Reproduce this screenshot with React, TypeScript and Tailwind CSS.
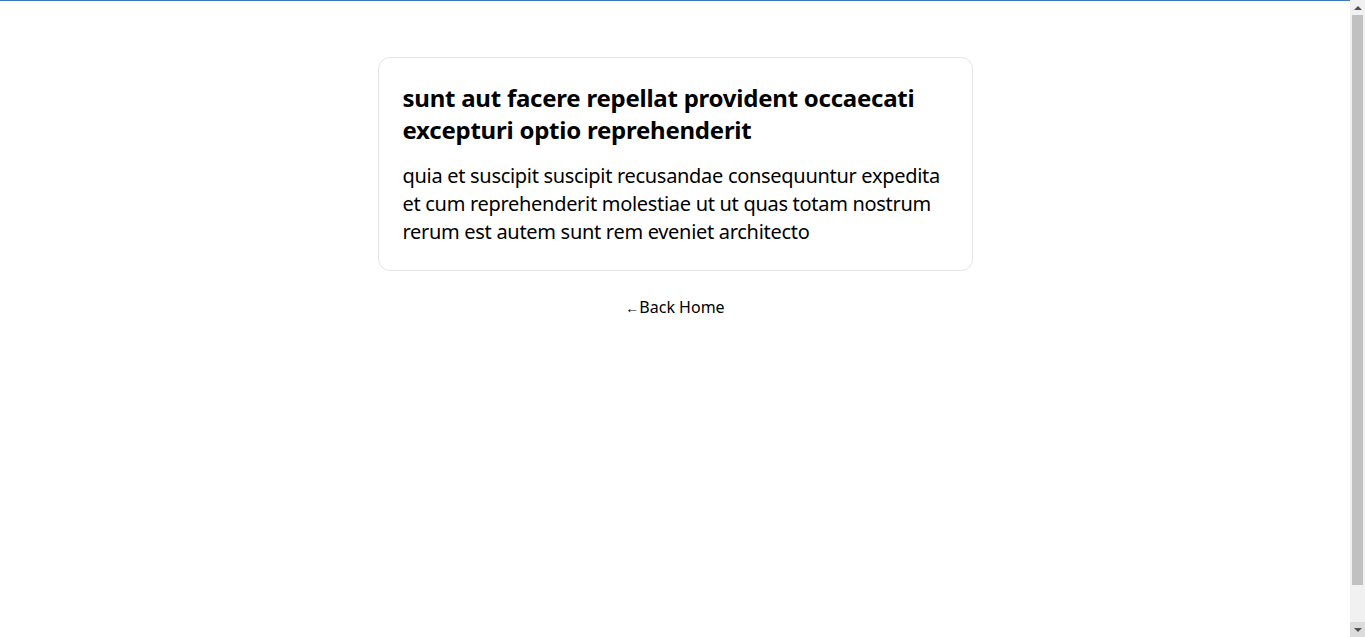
export default function App() {
  return (
    <div className="flex h-screen bg-white font-['Noto_Sans',sans-serif] text-black">
      <div className="flex min-w-0 flex-1 flex-col">
        <div className="h-px bg-[#3f78c0]" />
        <main className="flex flex-col items-center pt-14">
          <article className="w-[595px] rounded-xl border border-[#e5e5e5] p-6">
            <h1 className="text-2xl leading-8 font-bold tracking-[-0.01em]">
              sunt aut facere repellat provident occaecati excepturi optio reprehenderit
            </h1>
            <p className="mt-4 text-xl leading-7 tracking-[-0.015em]">
              quia et suscipit suscipit recusandae consequuntur expedita et cum reprehenderit molestiae ut ut quas totam nostrum rerum est autem sunt rem eveniet architecto
            </p>
          </article>
          <a href="/" className="mt-6 text-base leading-6">
            <span className="text-sm">←</span>Back Home
          </a>
        </main>
      </div>
      {/* scrollbar strip */}
      <div className="flex w-[15px] flex-col bg-[#f1f1f1]">
        <div className="flex h-[15px] items-center justify-center">
          <div className="h-0 w-0 border-x-4 border-b-4 border-x-transparent border-b-[#505050]" />
        </div>
        <div className="mx-[2px] flex-1 bg-[#c1c1c1] mb-[37px]" />
        <div className="flex h-[15px] items-center justify-center bg-[#dcdcdc]">
          <div className="h-0 w-0 border-x-4 border-t-4 border-x-transparent border-t-[#505050]" />
        </div>
      </div>
    </div>
  )
}
